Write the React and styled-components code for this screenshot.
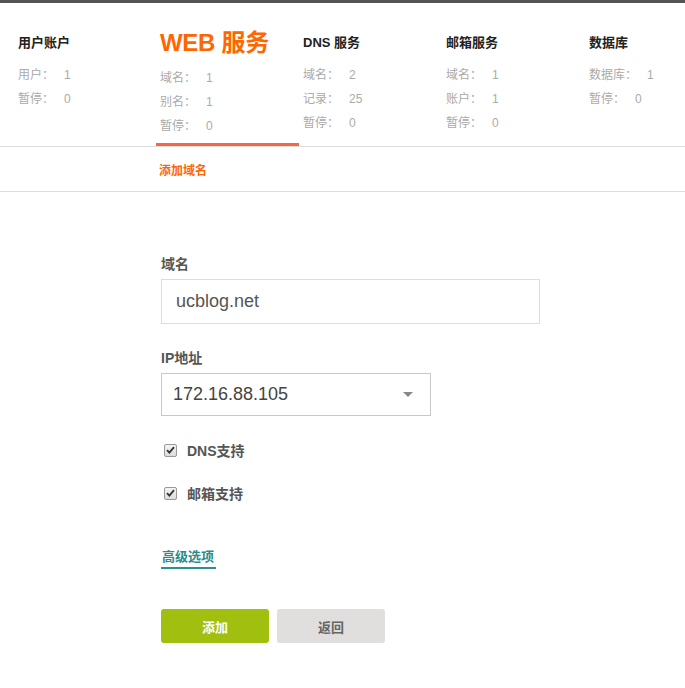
import styled, { createGlobalStyle } from 'styled-components';

const GlobalStyle = createGlobalStyle`
  html, body {
    margin: 0;
    padding: 0;
    background: #fff;
    font-family: "Liberation Sans", "Noto Sans CJK SC", sans-serif;
  }
`;

const tabs = [
  { title: '用户账户', stats: [['用户', 1], ['暂停', 0]] },
  { title: 'WEB 服务', active: true, stats: [['域名', 1], ['别名', 1], ['暂停', 0]] },
  { title: 'DNS 服务', stats: [['域名', 2], ['记录', 25], ['暂停', 0]] },
  { title: '邮箱服务', stats: [['域名', 1], ['账户', 1], ['暂停', 0]] },
  { title: '数据库', stats: [['数据库', 1], ['暂停', 0]] },
];

const Check = () => (
  <CheckBox>
    <svg width="9" height="8" viewBox="0 0 9 8">
      <path d="M1 4.2 L3.4 6.6 L8 1.2" fill="none" stroke="#333" strokeWidth="1.8" />
    </svg>
  </CheckBox>
);

const App = () => (
  <Page>
    <GlobalStyle />
    <Header>
      <TabRow>
        {tabs.map((t) => (
          <Tab key={t.title} active={t.active}>
            <TabTitle big={t.active}>{t.title}</TabTitle>
            {t.stats.map(([label, value]) => (
              <StatRow key={label}>
                <StatLabel>{label}：</StatLabel>
                <span>{value}</span>
              </StatRow>
            ))}
          </Tab>
        ))}
      </TabRow>
    </Header>
    <SubNav>
      <SubLink>添加域名</SubLink>
    </SubNav>
    <Form>
      <Label>域名</Label>
      <TextInput>ucblog.net</TextInput>
      <Label>IP地址</Label>
      <Select>
        <span>172.16.88.105</span>
        <Arrow />
      </Select>
      <CheckRow>
        <Check />
        <CheckLabel>DNS支持</CheckLabel>
      </CheckRow>
      <CheckRow>
        <Check />
        <CheckLabel>邮箱支持</CheckLabel>
      </CheckRow>
      <AdvancedLink>高级选项</AdvancedLink>
      <Buttons>
        <Button primary>添加</Button>
        <Button>返回</Button>
      </Buttons>
    </Form>
  </Page>
);

const Page = styled.div`
  width: 685px;
  min-height: 688px;
  border-top: 3px solid #555;
  box-sizing: border-box;
  overflow: hidden;
`;

const Header = styled.div`
  border-bottom: 1px solid #ddd;
`;

const TabRow = styled.div`
  display: flex;
  margin-left: 13px;
`;

const Tab = styled.div`
  flex: 0 0 143px;
  height: 143px;
  box-sizing: border-box;
  padding: 30px 0 0 4px;
  border-bottom: 3px solid ${({ active }) => (active ? '#f26a43' : 'transparent')};
  &:first-child {
    padding-left: 5px;
  }
`;

const TabTitle = styled.div`
  font-size: ${({ big }) => (big ? '24px' : '13px')};
  line-height: ${({ big }) => (big ? '27px' : '20px')};
  margin-top: ${({ big }) => (big ? '-4px' : '0')};
  margin-bottom: 10px;
  font-weight: bold;
  color: ${({ big }) => (big ? '#ff6600' : '#222')};
  letter-spacing: ${({ big }) => (big ? '-0.3px' : '0')};
`;

const StatRow = styled.div`
  display: flex;
  font-size: 12px;
  line-height: 24px;
  color: #aaa;
`;

const StatLabel = styled.span`
  margin-right: 10px;
`;

const SubNav = styled.div`
  height: 44px;
  display: flex;
  align-items: center;
  padding-left: 159px;
  border-bottom: 1px solid #ddd;
`;

const SubLink = styled.span`
  font-size: 12px;
  font-weight: bold;
  color: #ff6600;
`;

const Form = styled.div`
  padding: 62px 0 0 161px;
  display: flex;
  flex-direction: column;
  align-items: flex-start;
`;

const Label = styled.div`
  font-size: 14px;
  line-height: 20px;
  font-weight: bold;
  color: #555;
  margin-bottom: 5px;
`;

const TextInput = styled.div`
  width: 379px;
  height: 45px;
  box-sizing: border-box;
  border: 1px solid #ddd;
  padding-left: 14px;
  display: flex;
  align-items: center;
  font-size: 18px;
  color: #555;
  margin-bottom: 24px;
`;

const Select = styled.div`
  width: 270px;
  height: 43px;
  box-sizing: border-box;
  border: 1px solid #c8c8c8;
  padding: 0 17px 0 11px;
  display: flex;
  align-items: center;
  justify-content: space-between;
  font-size: 18px;
  color: #444;
  margin-bottom: 23px;
`;

const Arrow = styled.span`
  width: 0;
  height: 0;
  border-left: 5px solid transparent;
  border-right: 5px solid transparent;
  border-top: 5px solid #888;
`;

const CheckRow = styled.div`
  display: flex;
  align-items: center;
  height: 22px;
  margin-bottom: 21px;
  padding-left: 3px;
`;

const CheckBox = styled.span`
  width: 11px;
  height: 11px;
  border: 1px solid #999;
  border-radius: 2px;
  background: linear-gradient(#f4f4f4, #dcdcdc);
  display: flex;
  align-items: center;
  justify-content: center;
  margin-right: 10px;
`;

const CheckLabel = styled.span`
  font-size: 14px;
  font-weight: bold;
  color: #555;
`;

const AdvancedLink = styled.a`
  margin-top: 23px;
  font-size: 13px;
  font-weight: bold;
  color: #2a8c8c;
  line-height: 18px;
  padding: 0 2px 1px 1px;
  border-bottom: 2px solid #2a9090;
  text-decoration: none;
`;

const Buttons = styled.div`
  display: flex;
  gap: 8px;
  margin-top: 40px;
`;

const Button = styled.div`
  width: 108px;
  height: 34px;
  border-radius: 3px;
  display: flex;
  align-items: center;
  justify-content: center;
  font-size: 13px;
  font-weight: bold;
  background: ${({ primary }) => (primary ? '#a0bf0e' : '#e0dfdd')};
  color: ${({ primary }) => (primary ? '#fff' : '#666')};
`;

export default App;
